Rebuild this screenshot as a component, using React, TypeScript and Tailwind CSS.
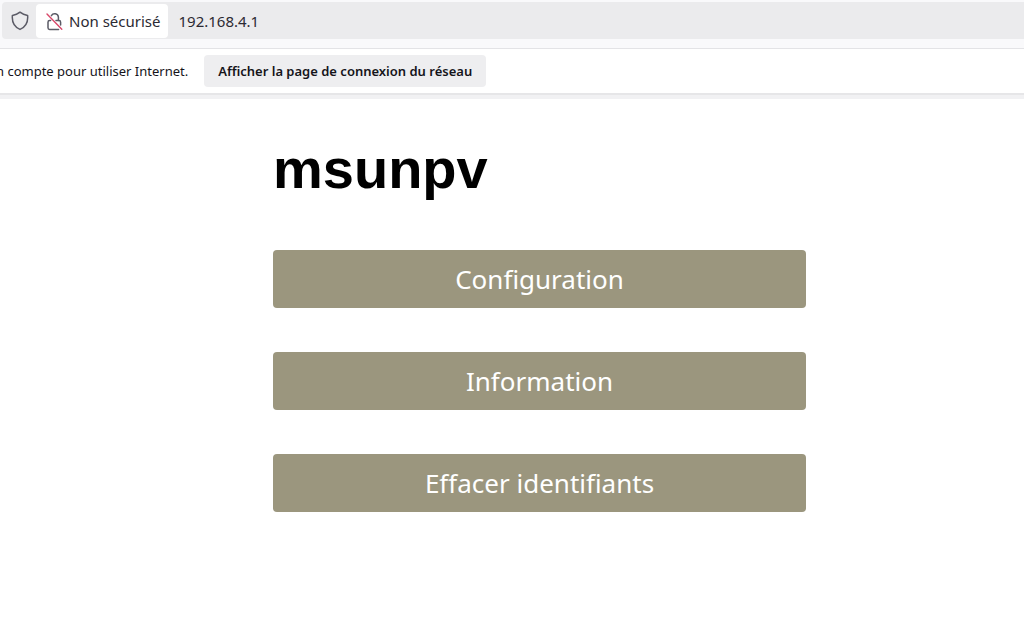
// ============================================
// Portail msunpv : barre du navigateur + menu
// ============================================

const menuItems = ['Configuration', 'Information', 'Effacer identifiants'];

function ShieldIcon() {
  return (
    <svg
      width="18"
      height="20"
      viewBox="0 0 18 20"
      fill="none"
      stroke="#5b5b66"
      strokeWidth="1.5"
      strokeLinejoin="round"
      aria-hidden="true"
    >
      <path d="M9 1.2 C11.2 3 13.6 4 16.6 4.4 C17.2 10.6 14.6 16 9 18.4 C3.4 16 0.8 10.6 1.4 4.4 C4.4 4 6.8 3 9 1.2 Z" />
    </svg>
  );
}

function InsecureLockIcon() {
  return (
    <svg width="18" height="20" viewBox="0 0 18 20" fill="none" aria-hidden="true">
      <g stroke="#5b5b66" strokeWidth="1.5" strokeLinecap="round" strokeLinejoin="round">
        <path d="M5.4 3.6 A3.8 3.8 0 0 1 12.4 5 V8.6" />
        <path d="M4.6 8.6 H3.6 A1.6 1.6 0 0 0 2 10.2 V15.8 A1.6 1.6 0 0 0 3.6 17.4 H12.6" />
        <path d="M10 8.6 H13 A1.6 1.6 0 0 1 14.6 10.2 V13" />
      </g>
      <path d="M1 2 L15.8 17.2" stroke="#d9486a" strokeWidth="1.4" strokeLinecap="round" />
    </svg>
  );
}

export default function App() {
  return (
    <div className="min-h-screen overflow-x-hidden bg-white">
      {/* Barre d'adresse */}
      <header className="border-b border-[#e3e3e6] bg-[#f9f9fb] pt-0.5 pb-[9px] pl-0.5">
        <div className="flex h-[37px] items-center rounded-l bg-[#ebebed] font-['Noto_Sans',sans-serif] text-[15px] text-[#2b2a33]">
          <button type="button" aria-label="Protection" className="flex w-[34px] justify-center pl-0.5">
            <ShieldIcon />
          </button>
          <button
            type="button"
            className="flex h-[34px] items-center gap-[5px] rounded bg-white pt-0.5 pr-2 pl-2.5 whitespace-nowrap"
          >
            <InsecureLockIcon />
            Non sécurisé
          </button>
          <input
            type="text"
            aria-label="Adresse"
            defaultValue="192.168.4.1"
            className="min-w-0 flex-1 bg-transparent px-2.5 pt-0.5 outline-none"
          />
        </div>
      </header>

      {/* Notification réseau */}
      <div className="flex items-center gap-4 border-b-2 border-[#e6e6e8] py-1.5 font-['Noto_Sans',sans-serif] text-[13px] whitespace-nowrap text-[#15141a]">
        <p className="-ml-1 pt-0.5">n compte pour utiliser Internet.</p>
        <button type="button" className="h-8 rounded bg-[#eeeef0] px-3.5 pt-0.5 font-semibold">
          Afficher la page de connexion du réseau
        </button>
      </div>
      <div className="h-1 bg-[#f1f1f3]" />

      {/* Page */}
      <main className="pt-9 pr-[218px] pl-[273px]">
        <h1 className="font-['Liberation_Sans',sans-serif] text-[56px] leading-[68px] font-bold text-black">
          msunpv
        </h1>
        <nav className="mt-[47px] flex flex-col gap-11">
          {menuItems.map((item) => (
            <button
              key={item}
              type="button"
              className="h-[58px] rounded bg-[#9b967e] font-['Noto_Sans',sans-serif] text-[26px] text-white"
            >
              {item}
            </button>
          ))}
        </nav>
      </main>
    </div>
  );
}
